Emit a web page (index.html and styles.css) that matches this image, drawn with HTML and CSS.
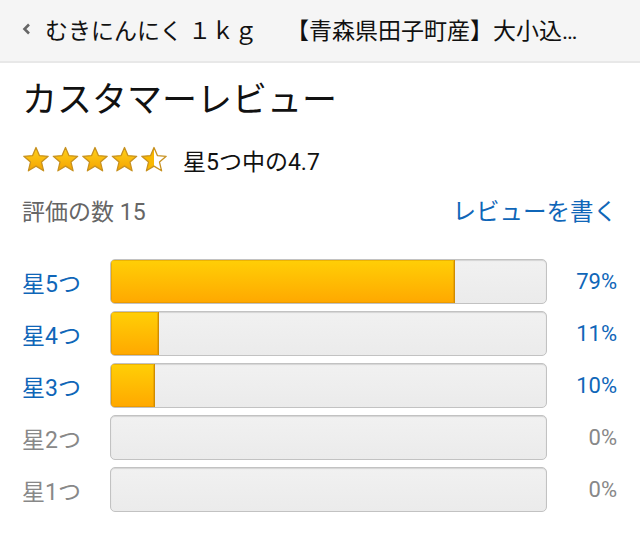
FILE: index.html
```html
<!DOCTYPE html>
<html lang="ja">
<head>
<meta charset="utf-8">
<link rel="stylesheet" href="styles.css">
</head>
<body>
<header class="topbar">
  <svg class="chev" width="9" height="12" viewBox="0 0 9 12"><path d="M7 1.5 L2.5 6 L7 10.5" fill="none" stroke="#666" stroke-width="2.6"/></svg>
  <span class="topbar-title">むきにんにく １ｋｇ　 【青森県田子町産】大小込…</span>
</header>
<main class="reviews">
  <h1 class="heading">カスタマーレビュー</h1>
  <div class="stars-row">
    <svg class="stars" width="148" height="28" viewBox="0 0 148 28">
      <defs>
        <linearGradient id="g" x1="0" y1="0" x2="0" y2="1">
          <stop offset="0" stop-color="#ffd21a"/>
          <stop offset="1" stop-color="#f4a300"/>
        </linearGradient>
        <linearGradient id="h" x1="0" y1="0" x2="1" y2="0">
          <stop offset="0.5" stop-color="#f9b800"/>
          <stop offset="0.5" stop-color="#ffffff"/>
        </linearGradient>
        <path id="s" d="M14 1.5 L17.4 9.6 L26.2 10.3 L19.5 16.1 L21.6 24.8 L14 20.1 L6.4 24.8 L8.5 16.1 L1.8 10.3 L10.6 9.6 Z"/>
      </defs>
      <use href="#s" x="0" fill="url(#g)" stroke="#c7911f" stroke-width="1.3" stroke-linejoin="round"/>
      <use href="#s" x="29.5" fill="url(#g)" stroke="#c7911f" stroke-width="1.3" stroke-linejoin="round"/>
      <use href="#s" x="59" fill="url(#g)" stroke="#c7911f" stroke-width="1.3" stroke-linejoin="round"/>
      <use href="#s" x="88.5" fill="url(#g)" stroke="#c7911f" stroke-width="1.3" stroke-linejoin="round"/>
      <use href="#s" x="118" fill="url(#h)" stroke="#c7911f" stroke-width="1.3" stroke-linejoin="round"/>
    </svg>
    <span class="avg">星5つ中の4.7</span>
  </div>
  <div class="count-row">
    <span class="count">評価の数 15</span>
    <a class="write">レビューを書く</a>
  </div>
  <div class="hist">
    <div class="row link"><span class="lab">星5つ</span><div class="bar"><div class="fill" style="width:79%"></div></div><span class="pct">79%</span></div>
    <div class="row link"><span class="lab">星4つ</span><div class="bar"><div class="fill" style="width:11%"></div></div><span class="pct">11%</span></div>
    <div class="row link"><span class="lab">星3つ</span><div class="bar"><div class="fill" style="width:10%"></div></div><span class="pct">10%</span></div>
    <div class="row"><span class="lab">星2つ</span><div class="bar"></div><span class="pct">0%</span></div>
    <div class="row"><span class="lab">星1つ</span><div class="bar"></div><span class="pct">0%</span></div>
  </div>
</main>
</body>
</html>
```
FILE: styles.css
```css
* { box-sizing: border-box; }
body {
  margin: 0;
  background: #fff;
  font-family: Roboto, "Noto Sans CJK JP", sans-serif;
  color: #111;
}
.topbar {
  height: 63px;
  background: #f5f5f5;
  border-bottom: 2px solid #e8e8e8;
  display: flex;
  align-items: center;
  padding: 0 0 4px 22px;
}
.chev { flex: none; margin-right: 14px; margin-top: 1px; }
.topbar-title {
  font-size: 23px;
  color: #111;
  white-space: nowrap;
}
.reviews { padding: 16px 23px 0 22px; }
.heading {
  margin: 0;
  font-size: 35px;
  font-weight: 400;
  line-height: 44px;
  color: #111;
}
.stars-row {
  display: flex;
  align-items: center;
  margin-top: 22px;
  height: 30px;
}
.stars { display: block; margin-right: 13px; }
.avg { font-size: 23px; color: #111; }
.count-row {
  display: flex;
  justify-content: space-between;
  align-items: center;
  margin-top: 14px;
  height: 42px;
}
.count { font-size: 23px; color: #666; }
.write { font-size: 23.5px; color: #0f66b8; }
.hist {
  margin-top: 28px;
  display: flex;
  flex-direction: column;
  gap: 7px;
}
.row {
  display: flex;
  align-items: center;
  height: 45px;
  color: #888;
}
.row.link { color: #0f66b8; }
.lab { width: 88px; font-size: 23px; }
.bar {
  flex: none;
  width: 437px;
  height: 45px;
  border: 1px solid #c2c2c2;
  border-radius: 5px;
  background: linear-gradient(#f1f1f1, #ebebeb);
  box-shadow: inset 0 1px 1px rgba(0,0,0,0.12);
  overflow: hidden;
}
.fill {
  height: 100%;
  background: linear-gradient(#ffcf06, #ffa800);
  border-right: 1px solid #d08c00;
  box-shadow: inset 0 0 0 1px rgba(200,130,0,0.35);
}
.pct { flex: 1; text-align: right; font-size: 22px; }
```
